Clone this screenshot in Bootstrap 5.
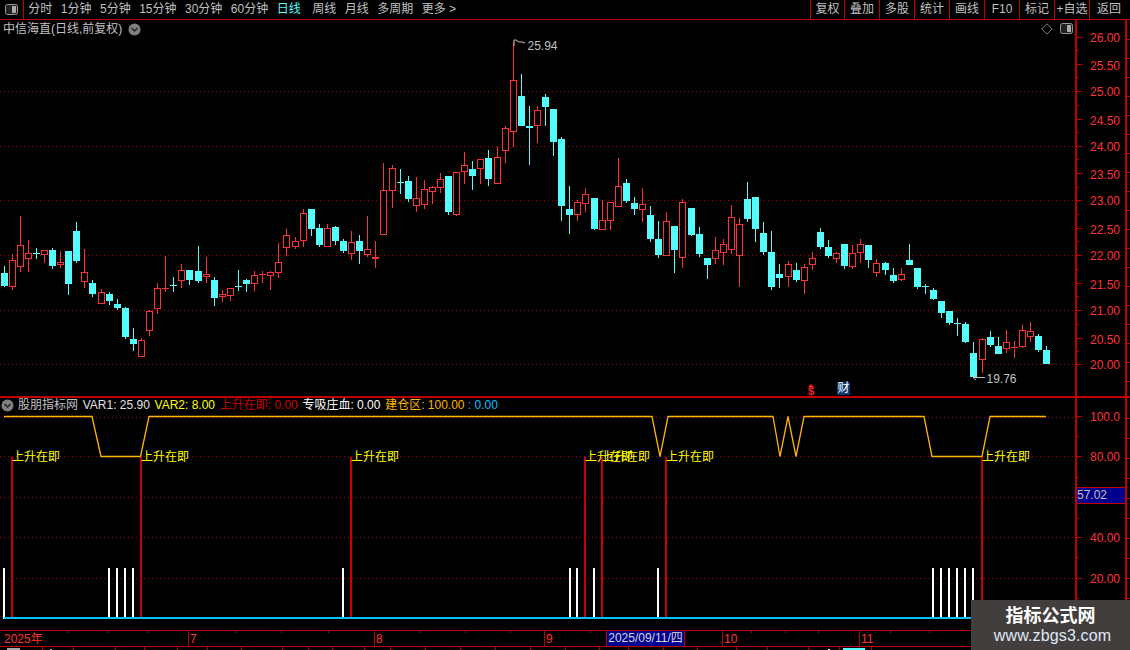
<!DOCTYPE html>
<html lang="zh">
<head>
<meta charset="utf-8">
<title>中信海直</title>
<link href="https://cdn.jsdelivr.net/npm/bootstrap@5.3.0/dist/css/bootstrap.min.css" rel="stylesheet">
<style>
html,body{background:#000;margin:0;overflow:hidden}
.app{width:1130px;height:650px;position:relative;background:#000;color:#c0c0c0;font:12px/14px "Liberation Sans","Noto Sans CJK SC",sans-serif}
.topbar{height:20px;border-bottom:1px solid #c00000}
.logo-cell{width:24px;border-right:1px solid #c00000}
.tab-item{padding:0 4.25px;white-space:nowrap;line-height:19px}
.tab-on{color:#54fcfc;margin-right:3px}
.act-btn{width:35px;border-left:1px solid #c00000;text-align:center;line-height:19px;white-space:nowrap}
.act-narrow{width:34px}
.act-last{width:41px;padding-right:2px}
.pane-top{height:376px}
.pane-low{height:234px;border-top:2px solid #c00000}
.plot{width:1075px;position:relative}
.plot svg{display:block}
.axis-col{width:50px;position:relative;border-left:2px solid #c00000}
.strip-col{width:5px;border-left:2px solid #c00000;position:relative}
.axis-lbl{position:absolute;right:5px;transform:translateY(-50%);color:#ff3232;white-space:nowrap}
.tick{position:absolute;left:0;height:1px;background:#c00000}
.tick-major{width:5px}
.tick-minor{width:2px}
.stick{position:absolute;left:0;width:3px;height:1px;background:#c00000}
.cur-box{position:absolute;left:0;right:0;top:89px;height:17px;background:#00008c;border-top:1px solid #c00000;border-bottom:1px solid #c00000;color:#c0c0c0;line-height:14px;z-index:1}
.pane-title{position:absolute;left:3px;top:2px;white-space:nowrap;gap:6px}
.pane-tools{position:absolute;right:2px;top:3px;gap:7px}
.legend-row{position:absolute;left:1px;top:0;height:14px;white-space:nowrap}
.leg{margin-right:4.7px}
.c-gray{color:#c0c0c0}.c-lt{color:#e0e0e0}.c-yel{color:#ffff00}.c-red{color:#c80000}.c-wht{color:#fff}.c-org{color:#ffb400}.c-sky{color:#00c0ff}
.mark-dollar{position:absolute;left:805px;top:367px;width:12px;text-align:center;color:#ff1e1e;font-size:11px;font-weight:700;line-height:9px;height:9px}
.mark-cai{position:absolute;left:837px;top:362px;width:13px;height:13px;background:#0a3a6e;color:#fff;text-align:center;line-height:13px;white-space:nowrap}
.date-row{height:17px;border-top:1px solid #c00000;border-bottom:1px solid #c00000;position:relative}
.date-row svg{position:absolute;left:0;top:0}
.date-txt{position:absolute;top:1px;color:#ff3232;line-height:14px}
.date-now{position:absolute;left:606px;top:0;width:79px;height:15px;background:#000090;border:1px solid #c00000;border-top:0;border-bottom:0;color:#d8d8d8;text-align:center;line-height:15px;white-space:nowrap}
.status-row{height:3px;overflow:hidden}
.status-row svg{display:block}
.stamp{position:absolute;right:0;bottom:0;width:159px;height:50px;background:#423e3e;z-index:3}
.stamp-t{color:#fff;font-size:18px;font-weight:700;line-height:22px}
.stamp-u{color:#dfe9f5;font-size:16px;line-height:18px;letter-spacing:.15px;padding-left:4px}
svg text{font:12px "Liberation Sans","Noto Sans CJK SC",sans-serif}
</style>
</head>
<body>
<div class="app d-flex flex-column">

  <nav class="topbar d-flex justify-content-between">
    <div class="d-flex">
      <div class="logo-cell d-flex align-items-center justify-content-center">
        <svg width="14" height="12" viewBox="0 0 14 12"><rect x=".5" y=".5" width="12" height="10" rx="2" fill="#222" stroke="#999"/><rect x="7" y="2" width="4" height="7" fill="#aaa"/></svg>
      </div>
      <div class="d-flex tabs-wrap">
        <span class="tab-item">分时</span><span class="tab-item">1分钟</span><span class="tab-item">5分钟</span><span class="tab-item">15分钟</span><span class="tab-item">30分钟</span><span class="tab-item">60分钟</span><span class="tab-item tab-on">日线</span><span class="tab-item">周线</span><span class="tab-item">月线</span><span class="tab-item">多周期</span><span class="tab-item">更多 &gt;</span>
      </div>
    </div>
    <div class="d-flex">
      <span class="act-btn act-narrow">复权</span><span class="act-btn">叠加</span><span class="act-btn">多股</span><span class="act-btn">统计</span><span class="act-btn">画线</span><span class="act-btn">F10</span><span class="act-btn">标记</span><span class="act-btn">+自选</span><span class="act-btn act-last">返回</span>
    </div>
  </nav>

  <section class="pane-top d-flex">
    <div class="plot">
      <svg id="mainSvg" width="1075" height="376" viewBox="0 20 1075 376"></svg>
      <div class="pane-title d-flex align-items-center">
        <span>中信海直(日线,前复权)</span>
        <svg width="13" height="13" viewBox="0 0 13 13"><circle cx="6.5" cy="6.5" r="6" fill="#808080"/><path d="M3.5 5l3 3 3-3" fill="none" stroke="#222" stroke-width="1.5"/></svg>
      </div>
      <div class="pane-tools d-flex align-items-center">
        <svg width="12" height="12" viewBox="0 0 12 12"><path d="M6 .8L11.2 6 6 11.2 .8 6z" fill="none" stroke="#808080"/></svg>
        <svg width="13" height="12" viewBox="0 0 13 12"><rect x=".5" y=".5" width="12" height="10" rx="2" fill="#222" stroke="#999"/><rect x="7" y="2" width="4" height="7" fill="#aaa"/></svg>
      </div>
      <span class="mark-dollar">$</span>
      <span class="mark-cai">财</span>
    </div>
    <div class="axis-col" id="axisTop"></div>
    <div class="strip-col" id="stripTop"></div>
  </section>

  <section class="pane-low d-flex">
    <div class="plot">
      <svg id="lowSvg" width="1075" height="232" viewBox="0 398 1075 232"></svg>
      <div class="legend-row d-flex align-items-center">
        <svg class="me-1" width="13" height="13" viewBox="0 0 13 13"><circle cx="6.5" cy="6.5" r="6" fill="#808080"/><path d="M3.5 5l3 3 3-3" fill="none" stroke="#222" stroke-width="1.5"/></svg>
        <span class="leg c-gray">股朋指标网</span>
        <span class="leg c-lt">VAR1: 25.90</span>
        <span class="leg c-yel">VAR2: 8.00</span>
        <span class="leg c-red">上升在即: 0.00</span>
        <span class="leg c-wht">专吸庄血: 0.00</span>
        <span class="c-org">建仓区: 100.00</span>
        <span class="c-sky">&nbsp;: 0.00</span>
      </div>
    </div>
    <div class="axis-col" id="axisLow"><div class="cur-box">57.02</div></div>
    <div class="strip-col" id="stripLow"></div>
  </section>

  <div class="date-row">
    <svg id="dateSvg" width="1130" height="15" viewBox="0 0 1130 15"></svg>
    <span class="date-txt" style="left:4px">2025年</span>
    <span class="date-txt" style="left:190px">7</span>
    <span class="date-txt" style="left:376px">8</span>
    <span class="date-txt" style="left:546px">9</span>
    <span class="date-now">2025/09/11/四</span>
    <span class="date-txt" style="left:724px">10</span>
    <span class="date-txt" style="left:861px">11</span>
  </div>
  <div class="status-row"><svg id="statusSvg" width="1130" height="3" viewBox="0 0 1130 3"></svg></div>

  <aside class="stamp d-flex flex-column align-items-center justify-content-center">
    <div class="stamp-t">指标公式网</div>
    <div class="stamp-u">www.zbgs3.com</div>
  </aside>
</div>

<script>
var RED='#ff3232',CY='#54fcfc';
/* v, up(1)/down(0), high, bodyTop, bodyBottom, low — read at 3x from the picture */
var groups=[
[0,200,[[13,0,198,219,259,260],[37,1,163,181,260,270],[61,1,48,136,200,216],[85,1,120,160,176,216],[109,0,144,159,162,177],[133,1,150,151,164,189],[157,0,144,150,198,207],[181,1,153,187,194,204],[205,0,153,153,252,285],[229,0,66,93,183,189],[253,1,147,217,245,264],[277,0,240,249,282,291],[304,1,268,277,311,311],[328,0,277,282,303,315],[352,0,297,312,324,330],[376,0,321,324,411,417],[400,0,384,417,432,453],[424,1,414,421,470,470],[448,1,331,334,392,408],[472,1,249,265,326,342],[496,1,168,264,267,276],[520,0,231,255,258,276],[544,1,192,211,242,264],[568,0,210,210,240,255],[595,0,138,213,243,249],[619,1,171,223,230,249],[643,0,231,240,294,318],[667,1,270,283,290,306],[691,1,265,265,287,303],[715,0,210,258,261,273],[739,0,237,240,252,276],[763,1,213,226,251,273],[787,1,213,222,226,249]]],
[270,140,[[1,1,392,397,407,450],[25,1,309,367,398,414],[49,1,267,286,323,347],[76,1,291,304,320,327],[100,1,207,220,302,321],[124,0,207,207,267,288],[148,0,252,264,315,321],[172,1,252,265,320,320],[196,0,258,261,303,315],[220,0,297,303,333,339],[244,1,273,307,341,360],[268,0,285,303,333,372],[292,1,228,328,344,351],[316,1,303,351,357,384],[340,1,69,151,284,284],[367,1,75,85,152,204],[391,0,87,126,129,162],[415,0,108,123,177,186],[439,1,111,175,197,216],[463,1,120,148,194,207],[487,1,138,142,155,192],[511,1,99,118,143,159],[535,0,108,108,216,225],[559,1,97,97,224,228],[583,1,36,76,95,132],[607,0,63,87,108,150],[631,1,57,58,86,132],[655,0,30,54,117,138]]],
[490,35,[[22,1,335,367,446,446],[46,1,274,280,347,384],[70,1,20,136,290,336],[94,0,117,183,273,273],[118,0,213,273,279,390],[142,1,213,226,272,324],[166,0,177,186,216,273],[190,0,222,222,321,363],[214,0,306,312,513,558],[238,0,453,522,540,597],[262,1,495,502,539,558],[286,1,459,478,506,531],[313,0,489,489,582,585],[337,1,495,556,584,584],[361,1,501,502,557,585],[385,1,369,454,515,515],[409,0,432,444,498,504],[433,0,486,504,522,540],[457,1,459,508,524,561],[481,0,513,540,612,621],[505,0,558,612,660,669],[529,1,531,559,662,662],[553,0,573,573,645,714],[577,1,492,502,670,699],[604,0,519,519,600,603],[628,0,576,597,657,666],[652,0,669,669,690,732],[676,1,606,646,671,687],[700,1,612,628,655,690],[724,1,510,547,646,657],[748,1,549,568,664,756],[772,0,441,492,552,561],[796,0,486,486,582,621]]],
[750,170,[[40,0,156,189,246,255],[64,0,183,246,351,360],[88,0,282,312,324,354],[115,1,273,283,320,351],[139,0,279,300,330,336],[163,1,282,292,332,372],[187,1,246,265,284,300],[211,0,174,186,231,237],[235,0,210,231,258,264],[259,1,246,250,266,279],[283,0,222,222,288,297],[307,1,225,250,290,297],[331,1,207,223,250,279],[355,0,225,225,270,294],[379,1,267,280,308,321],[406,0,276,279,300,315],[430,0,294,315,333,339],[454,1,294,313,329,333],[478,0,222,270,285,285],[502,0,294,294,351,357],[526,0,342,349,352,372],[550,0,354,360,387,390],[574,0,393,393,429,444],[598,0,423,423,459,465],[622,0,444,460,463,498],[646,0,456,462,516,519],[670,0,516,549,621,621],[697,1,504,508,569,609],[721,0,483,501,525,531],[745,0,501,528,552,552],[769,1,480,517,536,549],[793,1,513,531,534,564],[817,1,465,481,530,534],[841,1,456,484,500,516],[865,0,492,498,540,546],[889,0,528,540,582,582]]]
];
function svgEls(svg,html){svg.insertAdjacentHTML('beforeend',html);}
function dots(y){return '<line x1="0" x2="1075" y1="'+y+'.5" y2="'+y+'.5" stroke="#a00000" stroke-dasharray="1 3" shape-rendering="crispEdges"/>';}
var m='';
[91,146,200,255,310,364].forEach(function(y){m+=dots(y);});
m+='<g shape-rendering="crispEdges">';
groups.forEach(function(g){g[2].forEach(function(c){
  var col=Math.floor(g[0]+c[0]/3),col2=c[1]?RED:CY,f=function(v){return Math.round(g[1]+v/3);};
  var hi=f(c[2]),top=f(c[3]),bot=f(c[4]),lo=f(c[5]);
  m+='<rect x="'+col+'" y="'+hi+'" width="1" height="'+Math.max(lo-hi,1)+'" fill="'+col2+'"/>';
  if(c[1]&&bot-top>2){m+='<rect x="'+(col-2.5)+'" y="'+(top+.5)+'" width="6" height="'+(bot-top-1)+'" fill="#000" stroke="'+RED+'"/>';}
  else{m+='<rect x="'+(col-3)+'" y="'+top+'" width="7" height="'+Math.max(bot-top,1)+'" fill="'+col2+'"/>';}
});});
m+='</g>';
m+='<path d="M514 46V40h2l3 2 3 0 3 1" fill="none" stroke="#c0c0c0"/><text x="527.5" y="50" fill="#c0c0c0">25.94</text>';
m+='<path d="M985 377.5H973l3-2.5m-3 2.5l3 2.5" fill="none" stroke="#c0c0c0"/><text x="986.5" y="383" fill="#c0c0c0">19.76</text>';
m+='<path d="M811 384l3 3h-6z" fill="#ff1e1e"/>';
svgEls(document.getElementById('mainSvg'),m);

var l='';
[417,456,497,537,578].forEach(function(y){l+=dots(y);});
l+='<polyline fill="none" stroke="#ffb400" stroke-width="1.3" points="4,416.5 92,416.5 101,456.5 140.5,456.5 149,416.5 652,416.5 660,456.5 668,416.5 773,416.5 780,456.5 788,416.5 796,456.5 804,416.5 924,416.5 932,456.5 982,456.5 990,416.5 1046,416.5"/>';
l+='<g shape-rendering="crispEdges">';
[4,109,117,125,133,343,570,577,594,658,933,941,949,957,965,973].forEach(function(x){l+='<rect x="'+(x-1)+'" y="568" width="2" height="51" fill="#fff"/>';});
[12,141,351,585,602,666,982].forEach(function(x){l+='<rect x="'+(x-1)+'" y="457" width="2" height="160" fill="#c80000"/>';});
l+='<rect x="4" y="617" width="1071" height="2" fill="#00c0ff"/></g>';
[12,141,351,585,602,666,982].forEach(function(x){l+='<text x="'+x+'" y="461" fill="#ffff00">上升在即</text>';});
svgEls(document.getElementById('lowSvg'),l);

function axis(id,base,items,minor){
  var el=document.getElementById(id),h='';
  items.forEach(function(it){
    var y=it[1]-base;
    h+='<span class="tick tick-major" style="top:'+Math.floor(y)+'px"></span><span class="axis-lbl" style="top:'+(y+.5+(it[2]||0))+'px">'+it[0]+'</span>';
  });
  minor.forEach(function(y){h+='<span class="tick tick-minor" style="top:'+Math.floor(y-base)+'px"></span>';});
  el.insertAdjacentHTML('beforeend',h);
}
axis('axisTop',20,[['26.00',37],['25.50',64,1],['25.00',91],['24.50',119,1],['24.00',146],['23.50',173,1],['23.00',200.5],['22.50',228,1],['22.00',255],['21.50',283,1],['21.00',310],['20.50',338,1],['20.00',364.5]],[50.5,77.5,105,132.5,159.5,187,214,241.5,269,296.5,324,351]);
axis('axisLow',398,[['100.0',416.5],['80.00',456],['40.00',537],['20.00',578]],[436.5,477,518,557,598,618]);
function strip(id,n,step){var h='';for(var y=step;y<n;y+=step){h+='<span class="stick" style="top:'+y+'px"></span>';}document.getElementById(id).insertAdjacentHTML('beforeend',h);}
strip('stripTop',376,19);strip('stripLow',234,20);

var d='<g shape-rendering="crispEdges">';
[188,374,544,722,859].forEach(function(x){d+='<rect x="'+x+'" y="0" width="1" height="15" fill="#c00000"/>';});
[67,108,148,235,281,328,420,465,510,590,751,785,818,890,929].forEach(function(x){d+='<rect x="'+x+'" y="0" width="1" height="2" fill="#c00000"/>';});
d+='</g>';
svgEls(document.getElementById('dateSvg'),d);

var s='<g shape-rendering="crispEdges">';
[42,73,115,144,177,207,241,282,308,332,364,390,425,460,495,530,565,599,628,663,697,736,767,808,839,871].forEach(function(x){s+='<rect x="'+x+'" y="0" width="1" height="3" fill="#c00000"/>';});
s+='<rect x="7" y="1" width="13" height="2" fill="#aaa"/><rect x="50" y="2" width="2" height="1" fill="#aaa"/><rect x="828" y="2" width="2" height="1" fill="#fff"/><rect x="843" y="1" width="22" height="2" fill="#54fcfc"/></g>';
svgEls(document.getElementById('statusSvg'),s);
</script>
<script src="https://cdn.jsdelivr.net/npm/bootstrap@5.3.0/dist/js/bootstrap.bundle.min.js"></script>
</body>
</html>
